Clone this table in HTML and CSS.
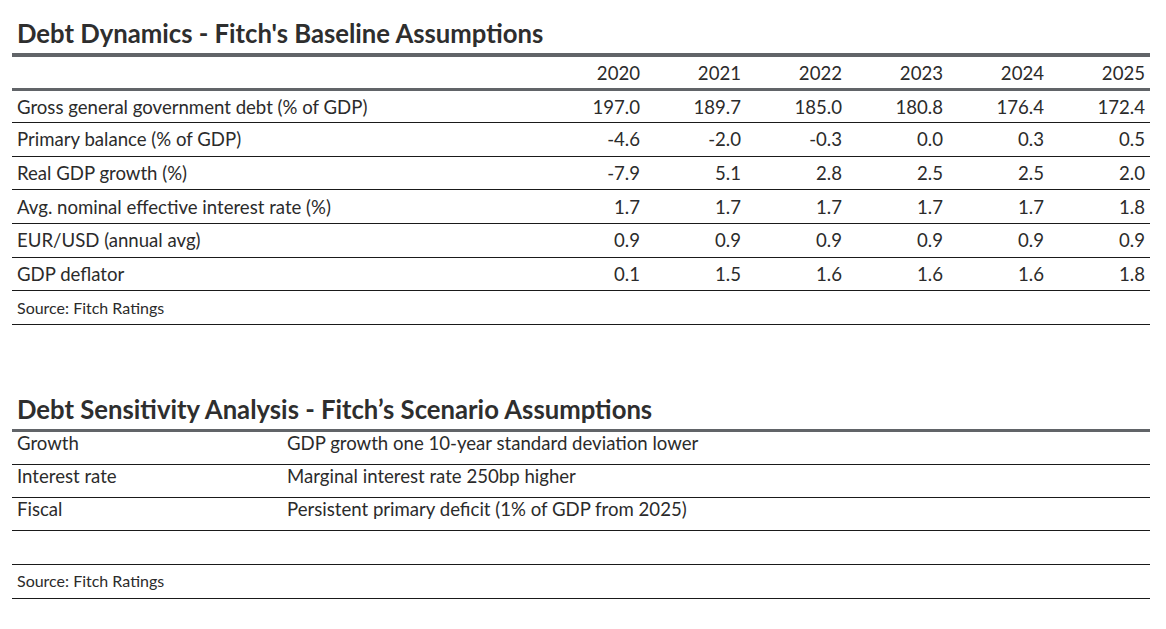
FILE: index.html
```html
<!DOCTYPE html>
<html>
<head>
<meta charset="utf-8">
<link rel="stylesheet" href="styles.css">
</head>
<body>
<div class="page">
  <section class="block">
    <h2 class="title">Debt Dynamics - Fitch's Baseline Assumptions</h2>
    <div class="table dyn">
      <div class="row head">
        <div class="label"></div>
        <div class="num">2020</div><div class="num">2021</div><div class="num">2022</div><div class="num">2023</div><div class="num">2024</div><div class="num">2025</div>
      </div>
      <div class="row data first">
        <div class="label">Gross general government debt (% of GDP)</div>
        <div class="num">197.0</div><div class="num">189.7</div><div class="num">185.0</div><div class="num">180.8</div><div class="num">176.4</div><div class="num">172.4</div>
      </div>
      <div class="row data">
        <div class="label">Primary balance (% of GDP)</div>
        <div class="num">-4.6</div><div class="num">-2.0</div><div class="num">-0.3</div><div class="num">0.0</div><div class="num">0.3</div><div class="num">0.5</div>
      </div>
      <div class="row data">
        <div class="label">Real GDP growth (%)</div>
        <div class="num">-7.9</div><div class="num">5.1</div><div class="num">2.8</div><div class="num">2.5</div><div class="num">2.5</div><div class="num">2.0</div>
      </div>
      <div class="row data">
        <div class="label">Avg. nominal effective interest rate (%)</div>
        <div class="num">1.7</div><div class="num">1.7</div><div class="num">1.7</div><div class="num">1.7</div><div class="num">1.7</div><div class="num">1.8</div>
      </div>
      <div class="row data">
        <div class="label">EUR/USD (annual avg)</div>
        <div class="num">0.9</div><div class="num">0.9</div><div class="num">0.9</div><div class="num">0.9</div><div class="num">0.9</div><div class="num">0.9</div>
      </div>
      <div class="row data">
        <div class="label">GDP deflator</div>
        <div class="num">0.1</div><div class="num">1.5</div><div class="num">1.6</div><div class="num">1.6</div><div class="num">1.6</div><div class="num">1.8</div>
      </div>
      <div class="row source">Source: Fitch Ratings</div>
    </div>
  </section>

  <section class="block second">
    <h2 class="title">Debt Sensitivity Analysis - Fitch’s Scenario Assumptions</h2>
    <div class="table sens">
      <div class="row srow">
        <div class="key">Growth</div>
        <div class="desc">GDP growth one 10-year standard deviation lower</div>
      </div>
      <div class="row srow">
        <div class="key">Interest rate</div>
        <div class="desc">Marginal interest rate 250bp higher</div>
      </div>
      <div class="row srow">
        <div class="key">Fiscal</div>
        <div class="desc">Persistent primary deficit (1% of GDP from 2025)</div>
      </div>
      <div class="row srow empty"></div>
      <div class="row source">Source: Fitch Ratings</div>
    </div>
  </section>
</div>
</body>
</html>
```

FILE: styles.css
```css
html, body {
  margin: 0;
  padding: 0;
  background: #ffffff;
}

body {
  font-family: Lato, "Open Sans", "Liberation Sans", sans-serif;
  color: #2b2b2b;
}

.page {
  padding: 20px 16px 0 12px;
  width: 1138px;
}

.title {
  margin: 0 0 4px 0;
  padding-left: 5px;
  font-size: 25.7px;
  font-weight: 700;
  line-height: 27px;
  height: 29px;
  color: #2e2e2e;
  white-space: nowrap;
}

.table {
  border-top: 4px solid #616468;
}

.sens {
  border-top-width: 3px;
}

.row {
  display: flex;
  box-sizing: border-box;
  border-bottom: 1px solid #1a1a1a;
  font-size: 18.6px;
  line-height: 20px;
  white-space: nowrap;
}

.head {
  height: 34px;
  align-items: center;
  border-bottom: 3px solid #616468;
}

.data {
  height: 33.67px;
  align-items: center;
}

.data.first {
  height: 32px;
}

.label {
  flex: 1 1 auto;
  padding-left: 5px;
}

.num {
  width: 101px;
  flex: 0 0 101px;
  text-align: right;
  box-sizing: border-box;
  padding-right: 5px;
}

.source {
  height: 33.67px;
  align-items: center;
  padding-left: 5px;
  font-size: 16px;
}

.second {
  margin-top: 71px;
}

.srow {
  height: 33.2px;
  align-items: flex-start;
  padding-top: 1px;
}

.srow:first-child {
  height: 33px;
}

.key {
  width: 270px;
  flex: 0 0 270px;
  box-sizing: border-box;
  padding-left: 5px;
}

.desc {
  flex: 1 1 auto;
  padding-left: 5px;
}

.sens .source {
  height: 34px;
}
```
